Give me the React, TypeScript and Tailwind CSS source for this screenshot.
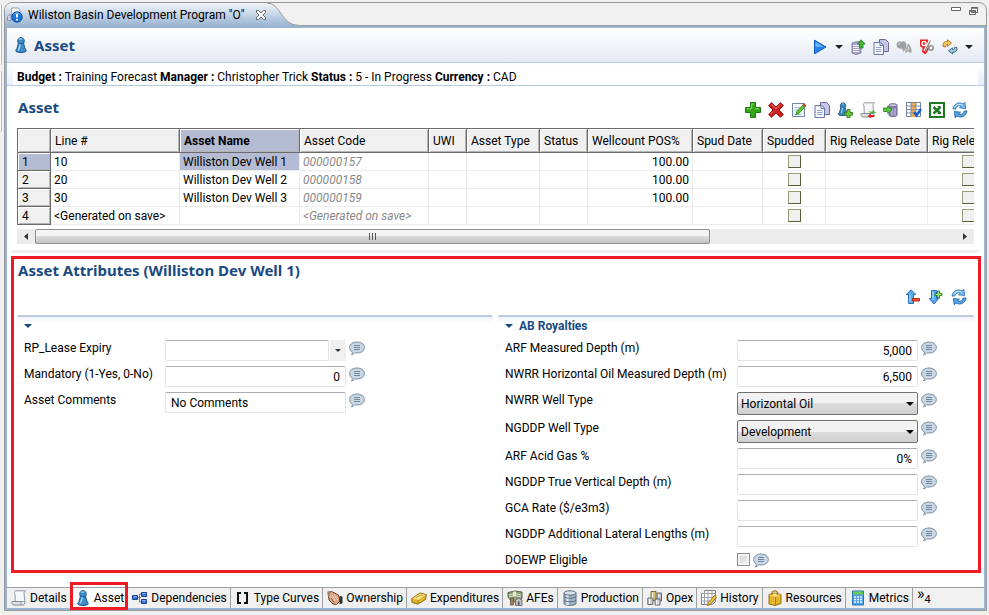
import type { ReactNode } from "react";

function Svg({ children, w = 16, h = 16 }: { children: ReactNode; w?: number; h?: number }) {
  return (
    <svg width={w} height={h} viewBox={`0 0 ${w} ${h}`} fill="none" aria-hidden="true" className="block shrink-0">
      {children}
    </svg>
  );
}

const DownArrow = ({ color = "#222" }: { color?: string }) => (
  <Svg w={8} h={4}>
    <path d="M0 0h8L4 4z" fill={color} />
  </Svg>
);

const Pawn = () => (
  <Svg>
    <path d="M8 .5a3.600 3.600 0 0 1 2.700 5.600c.5 3 1 5.300 2.500 7.100.6 1.300-1.500 2.300-5.200 2.300s-5.800-1-5.200-2.300c1.500-1.800 2-4.100 2.500-7.100A3.600 3.600 0 0 1 8 .5z" fill="#3c8dc8" stroke="#1d5686" />
    <path d="M6.300 2.500c1-.9 2.200-.8 2.800-.1M7.300 6.500C7 9.500 6 12 5 13.400" stroke="#a5d5f5" strokeWidth="1.400" />
    <path d="M5.700 6.300c1 .6 3.600.6 4.600 0" stroke="#1d5686" />
  </Svg>
);
const PawnPlus = () => (
  <Svg>
    <path d="M6 .8a2.800 2.800 0 0 1 2.200 4.400c.4 3 1 5 2.200 6.800.5 1.500-8.600 2.500-9.100 0C2.800 10.100 3.400 8 3.800 5.200A2.800 2.800 0 0 1 6 .8z" fill="#3987bd" stroke="#1f5b8a" />
    <path d="M5 2.300c.7-.6 1.400-.5 1.800 0M5.500 6L4.300 11" stroke="#a9d6f2" />
    <path d="M10 7.500h3v3h3v2.500h-3V16h-3v-3H7.500v-2.500H10z" fill="#6fca3a" stroke="#1f6d17" strokeWidth=".8" />
  </Svg>
);
const Play = () => (
  <Svg>
    <path d="M2.500 1.200L14 8 2.500 14.800z" fill="#2585e8" stroke="#0f5cc0" />
    <path d="M3.500 3l8 4.700h-8z" fill="#6bb6fa" />
  </Svg>
);
const ServerUp = () => (
  <Svg>
    <path d="M2 4l6-1.500 3 1.500v10l-5 1.500L2 14z" fill="#a9a4cf" stroke="#8680ac" />
    <path d="M3 6.500h6M3 8.500h6M3 10.500h6M3 12.500h6" stroke="#f2f1fa" />
    <path d="M11 .8L15.200 5h-2.200v4H9.500V5H7.500z" fill="#45b53a" stroke="#1e7a1c" strokeWidth=".8" />
  </Svg>
);
const Copy = () => (
  <Svg>
    <path d="M6.500.5h6l3 3v9h-9z" fill="#c9c5e6" stroke="#6d6799" />
    <path d="M1 3.500h6.500L10.500 6v9.500H1z" fill="#f5f7fd" stroke="#6474a5" />
    <path d="M7 3.500V6.500h3.500" stroke="#6474a5" />
    <path d="M3 8.500h5.500M3 10.500h5.500M3 12.500h5.500" stroke="#8ea4cf" />
  </Svg>
);
const GrayBalls = () => (
  <Svg>
    <path d="M.5 5.500a3.300 3.300 0 0 1 5-2.800 3.500 3.500 0 0 1 5 2.800l-.7 3.500-2.300 4-1.500-3.500A4 4 0 0 1 .5 5.500z" fill="#a0a0a0" />
    <path d="M12.500 4.500c2 2 3.300 5.500 3.300 9h-2.300l-1.500-1-3 1.500c0-3 1.500-7.500 3.500-9.500z" fill="#a8a8a8" />
    <path d="M2 5.500l2.500-1.500M12.500 7.500v3M10.500 11l1.500-.5" stroke="#dcdcdc" />
  </Svg>
);
const Percent = () => (
  <Svg>
    <path d="M1 .5h8l1.500 3L10 10l-3.500 5.500L3 13l.5-4L1 7z" fill="#ee2222" />
    <circle cx="5" cy="4.500" r="2" stroke="#fff" strokeWidth="1.400" />
    <path d="M11 1.500L5.500 12" stroke="#fff" strokeWidth="2.600" />
    <path d="M11.500 1.500L6 12" stroke="#888" strokeWidth="1.200" />
    <circle cx="12" cy="9" r="2.200" fill="#fff" stroke="#8f8f8f" strokeWidth="1.500" />
  </Svg>
);
const Swap = () => (
  <Svg>
    <path d="M1 7.500C1 3.500 2.500 2.300 5.500 2.500V.8L9.500 4 5.500 7.300V5.500C4 5.400 3.300 6.200 3.700 8z" fill="#f6c65a" stroke="#a87419" strokeWidth=".9" />
    <path d="M15 8.500c.3 3.500-1.500 5-4.500 4.800V15L6.500 11.800 10.500 8.800v1.700c1.700.1 2.300-.7 2.200-2.300z" fill="#9cc4d8" stroke="#3c6b82" strokeWidth=".9" />
  </Svg>
);
const Plus = () => (
  <Svg>
    <path d="M5.500.5h5v5h5v5h-5v5h-5v-5h-5v-5h5z" fill="#35a51c" stroke="#1d7a10" />
    <path d="M6.500 2h2.500M2 6.700h4.700V2M10 6.700h4" stroke="#86dd66" />
  </Svg>
);
const Cross = () => (
  <Svg>
    <path d="M3.500.7L8 5l4.500-4.300 2.800 2.800L11 8l4.300 4.500-2.800 2.800L8 11l-4.500 4.300L.7 12.500 5 8 .7 3.500z" fill="#cf2020" stroke="#8d0f0f" />
    <path d="M3.500 2.300L8 6.700l4.300-4.200M2.300 12.300L5 9.600" stroke="#f07b6c" />
  </Svg>
);
const Edit = () => (
  <Svg>
    <path d="M1.500 1.500h12v13h-12z" fill="#f2f6fb" stroke="#6d87a5" />
    <path d="M3.500 5.500h6M3.500 8h4M3.500 12.500h7" stroke="#a9bdd3" />
    <path d="M12.800 2.200l2 2L7.800 11.500 4.800 12.500l1-3z" fill="#5fc22f" stroke="#2c7d16" strokeWidth=".8" />
    <path d="M13 1.300l2.300 2.300-1.500 1.500-2.300-2.300z" fill="#e0352b" />
  </Svg>
);
const ScrollShape = () => (
  <>
    <path d="M4.500.8h10c-1.500.8-1.600 2-1.400 3.200l.7 7.500H4.300L4 4.300C3.300 3 3.300 1.500 4.500.8z" fill="#f7f8fa" stroke="#9299a3" />
    <path d="M1 11.500h9.300c-.7 1.500-.3 3 1.200 3.500H2.800C1.300 14.700.5 13 1 11.500z" fill="#dfe2e7" stroke="#848b95" />
    <path d="M13.800 11.500c.2 2-.6 3.500-2.300 3.500" stroke="#848b95" />
  </>
);
const Scroll = () => (
  <Svg>
    <ScrollShape />
  </Svg>
);
const ScrollSwap = () => (
  <Svg>
    <ScrollShape />
    <path d="M8 9.500h4.500V8L16 10.500 12.500 12z" fill="#49b938" />
    <path d="M14.500 13H11v-1.500L7.500 14l3.500 2v-1h3.500z" fill="#d62222" />
  </Svg>
);
const DbArrow = () => (
  <Svg>
    <path d="M6 3.500v9.500c0 2.200 8 2.200 8 0V3.500z" fill="#8e88b8" stroke="#6b658f" />
    <ellipse cx="10" cy="3.300" rx="4" ry="1.600" fill="#cfcbe6" stroke="#6b658f" />
    <path d="M9 7v6.500M12 6.500v7" stroke="#c9c6e0" />
    <path d="M.7 6h4V4L9 7.700 4.700 11.500V9.500h-4z" fill="#5cc63e" stroke="#1f7a1b" strokeWidth=".8" />
  </Svg>
);
const GridCheck = () => (
  <Svg>
    <path d="M.5.5h14v14H.5z" fill="#fff" stroke="#6f7f96" />
    <path d="M5 1h5v14H5z" fill="#f3a94b" />
    <path d="M5 .5v14M10 .5v14M.5 4h14M.5 7.500h14M.5 11h14" stroke="#7e8ca3" />
    <path d="M8 10l2.500 3.500L15 7" stroke="#1463cc" strokeWidth="2.400" />
  </Svg>
);
const Excel = () => (
  <Svg>
    <path d="M1 1h14v14H1z" fill="#fff" stroke="#1c7a22" strokeWidth="2" />
    <path d="M4.500 5l7 6.500M11.500 5l-7 6.500" stroke="#1c7a22" strokeWidth="2.400" />
    <path d="M8.500 4.500h3M8.500 11.500h3.500" stroke="#1c7a22" />
  </Svg>
);
const Refresh = () => (
  <Svg>
    <path d="M1 7C1.500 2.500 6.500-.8 11 2l1.800-1.700.9 6.200-6.200-.7L9.200 4.200C6.700 3 4.300 4.300 3.800 7z" fill="#7bbcf0" stroke="#2c74bb" strokeWidth=".9" />
    <path d="M15 9c-.5 4.500-5.500 7.800-10 5l-1.800 1.700-.9-6.200 6.200.7-1.700 1.600c2.500 1.200 4.900-.1 5.400-2.800z" fill="#5aa3e0" stroke="#2467ab" strokeWidth=".9" />
    <path d="M2.500 5.500C4 2.500 7.500 1.500 10.500 3.200" stroke="#d3eafc" />
  </Svg>
);
const ArrowUpMinus = () => (
  <Svg>
    <path d="M6 .8L10.700 5.500H8.500V14.500h-5v-9H1.300z" fill="#56abee" stroke="#1c62b5" strokeWidth=".9" />
    <path d="M5 5.500v8" stroke="#b8dffb" />
    <path d="M7.500 9.500h7v2.500h-7z" fill="#f2542d" stroke="#b81c10" strokeWidth=".9" />
  </Svg>
);
const ArrowDownPlus = () => (
  <Svg>
    <path d="M3.500 1.500h5v8h2.200L6 15 1.300 9.500h2.200z" fill="#56abee" stroke="#1c62b5" strokeWidth=".9" />
    <path d="M5 2.500v8" stroke="#b8dffb" />
    <path d="M9.500 2h2v2.500H14v2h-2.500V9h-2V6.500H7v-2h2.500z" fill="#a8e67c" stroke="#22821a" strokeWidth=".9" />
  </Svg>
);
const Bubble = () => (
  <Svg w={16} h={15}>
    <path d="M8 1c4 0 7.400 2.200 7.400 5.500S12 12 8 12c-.8 0-1.500 0-2.200-.2-1 1.200-2 1.900-3.300 2.100.7-.8 1-1.700.8-2.900C1.600 10 .6 8.500.6 6.500.6 3.200 4 1 8 1z" fill="#c6d6e4" stroke="#7c8f9f" />
    <path d="M5 4.500h6M5 6.500h6M5 8.500h6" stroke="#75889a" />
  </Svg>
);
const Nodes = () => (
  <Svg>
    <path d="M5 7.500h4M7.500 4v8M7.500 4H10M7.500 12H10" stroke="#777" />
    <path d="M.5 5.500h5v4h-5zM9.500 2.500h5v4h-5zM9.500 9.500h5v4h-5z" fill="#3b78dc" stroke="#1b3f9c" />
    <path d="M1.500 6.500h3M10.500 3.500h3M10.500 10.500h3" stroke="#93bdf5" />
  </Svg>
);
const Brackets = () => (
  <Svg>
    <path d="M6 3H3v10h3M9 3h3v10H9" stroke="#111" strokeWidth="2" />
  </Svg>
);
const Hands = () => (
  <Svg>
    <path d="M1 2.500l3.500-1 7 3.500 1.500 6-3.500 3.500-3.500-.5L2 10z" fill="#d9a583" stroke="#6e4630" />
    <path d="M3 6l4 5M5 5l4 6.500M7.500 5l3.500 5" stroke="#f4d3bb" />
    <path d="M.5 1.500L3 1v4L1 6.500z" fill="#9a8578" />
    <path d="M12.500 6l3 .5v7l-3 .5z" fill="#303030" />
    <path d="M4 8l3 4" stroke="#7d5038" />
  </Svg>
);
const Gold = () => (
  <Svg>
    <path d="M.8 8.500L9 3l6.300 1.500-.8 5L7 14l-6-1.500z" fill="#e2b52c" stroke="#8d6a0e" />
    <path d="M1.500 8.500L9.200 3.600l5.300 1.200L7.500 9.700z" fill="#fbe88a" />
    <path d="M7.300 10l-.3 3.500" stroke="#a98113" />
    <path d="M4.500 8l5-3 2.500.5" stroke="#c59a22" />
  </Svg>
);
const Cash = () => (
  <Svg>
    <path d="M1 2.500l7-1.500 7 1v6l-2 4H5L1 7z" fill="#8da07c" stroke="#58634b" />
    <path d="M2 5l6-1.500L14 5M2 7l6-1.500L14 7" stroke="#d7dfc9" />
    <path d="M6 1.500l3 0v5H6z" fill="#efe6c7" />
    <path d="M3.500 8h3v7h-3z" fill="#a07f5b" stroke="#6e563c" strokeWidth=".8" />
    <path d="M8.500 10l3-2 3.500 2v5.500H8.500z" fill="#bfbfbf" stroke="#6b6b6b" strokeWidth=".9" />
    <path d="M11 11.500h1.500v3.500H11z" fill="#555" />
  </Svg>
);
const Database = () => (
  <Svg>
    <path d="M2 3v10.500c0 2.500 12 2.500 12 0V3z" fill="#9fb1c4" stroke="#5c6f84" />
    <path d="M5.500 5v10" stroke="#dde6ef" strokeWidth="2.500" />
    <ellipse cx="8" cy="3" rx="6" ry="2.200" fill="#d7e1ea" stroke="#5c6f84" />
    <path d="M2 6.500c0 2.300 12 2.300 12 0M2 10c0 2.300 12 2.300 12 0" stroke="#5c6f84" />
  </Svg>
);
const Valves = () => (
  <Svg>
    <path d="M4 1.500h5v9H4z" fill="#dcc36c" stroke="#7d6a28" />
    <path d="M10 3h4.500v8H10z" fill="#b9bdc0" stroke="#676b70" />
    <path d="M.8 8h5v6.500h-5zM8 9h5v6H8z" fill="#cfd2d5" stroke="#696d72" />
    <path d="M2.500 9v5M5.500 2.500v5M9.700 10v4.500M11.800 4v4" stroke="#fff" />
  </Svg>
);
const History = () => (
  <Svg>
    <path d="M3.500.5h11v11l-3 3H.5v-11h3z" fill="#fff" stroke="#7c7f86" />
    <path d="M3.500.5v14M7 .5v14M11 .5v14M.5 3.500h14M.5 7.500h14M.5 11h14" stroke="#9da0a7" />
    <path d="M13.500 5.500l2 2-6.500 7-2.500 1 .7-2.700z" fill="#f4c53c" stroke="#8d6a1b" strokeWidth=".9" />
  </Svg>
);
const Box = () => (
  <Svg>
    <path d="M2 4.500l5.500-1.500L14 4.500v9L8 15.500 2 14z" fill="#e5b52e" stroke="#94700f" />
    <path d="M2.500 4.700L7.500 3.500l6 1.200L8 6.700z" fill="#fae38c" />
    <path d="M8.500 7v8" stroke="#a98114" />
    <path d="M5 5V2.500C6 .3 9.500.3 10.500 2.500V5" stroke="#a07812" strokeWidth="1.300" />
  </Svg>
);
const Calc = () => (
  <Svg>
    <path d="M2.500 1h11v14h-11z" fill="#4f9fe3" stroke="#2d74b8" />
    <path d="M3 1.500h10v3H3z" fill="#66cc55" />
    <path d="M4 7h2M7 7h2M10 7h2M4 9.500h2M7 9.500h2M10 9.500h2M4 12h2M7 12h2M10 12h2" stroke="#e6f3ff" strokeWidth="1.400" />
  </Svg>
);
const Document = () => (
  <Svg>
    <path d="M4.500 1h7l2.500 5v8h-9z" fill="#fff" stroke="#98a3bd" />
    <path d="M.5 9.500L4 7v6.500H.5z" fill="#cfd4e6" stroke="#8b8fb0" />
    <circle cx="10" cy="10" r="5.200" fill="#1c75d4" stroke="#0d4da0" />
    <path d="M7 7.500c1.500-2 4.500-2 6 0" stroke="#8cc6f8" />
    <path d="M10 6.800v3.700M10 11.700v1.800" stroke="#fff" strokeWidth="1.800" />
  </Svg>
);

function IconButton({ label, children }: { label: string; children: ReactNode }) {
  return (
    <button type="button" aria-label={label} className="block shrink-0">
      {children}
    </button>
  );
}

const heading = "font-['Noto_Sans','Open_Sans',sans-serif] text-[15px] leading-5 font-bold text-[#1a4a82]";

const columns = [
  { name: "Line #", width: "w-[129px]" },
  { name: "Asset Name", width: "w-[120px]" },
  { name: "Asset Code", width: "w-[129px]" },
  { name: "UWI", width: "w-[38px]" },
  { name: "Asset Type", width: "w-[73px]" },
  { name: "Status", width: "w-[48px]" },
  { name: "Wellcount POS%", width: "w-[105px]" },
  { name: "Spud Date", width: "w-[70px]" },
  { name: "Spudded", width: "w-[63px]" },
  { name: "Rig Release Date", width: "w-[102px]" },
  { name: "Rig Rele", width: "w-[82px]" },
];

const rows = [
  { line: "10", name: "Williston Dev Well 1", code: "000000157", pos: "100.00" },
  { line: "20", name: "Williston Dev Well 2", code: "000000158", pos: "100.00" },
  { line: "30", name: "Williston Dev Well 3", code: "000000159", pos: "100.00" },
  { line: "<Generated on save>", name: "", code: "<Generated on save>", pos: "" },
];

const raised = "border-r border-b border-[#6b6b6b] shadow-[inset_1px_1px_0_#fff,inset_-1px_-1px_0_#b5b5b5]";
const cell = "h-[18px] border-r border-b border-[#ececec] px-[3px] whitespace-nowrap";

function CellCheck({ label }: { label: string }) {
  return (
    <input
      type="checkbox"
      aria-label={label}
      className="mx-auto block size-[13px] appearance-none border border-t-[#9a9a78] border-r-[#5c5c3c] border-b-[#5c5c3c] border-l-[#9a9a78] bg-[#f0f0f0]"
    />
  );
}

function AssetTable() {
  return (
    <div className="overflow-hidden">
      <table className="w-[993px] table-fixed border-separate border-spacing-0 border-t border-l border-[#6b6b6b] text-left leading-4">
        <thead>
          <tr>
            <th aria-label="Row" className={`h-6 w-[33px] bg-[#f0f0f0] ${raised}`} />
            {columns.map((c) => (
              <th
                key={c.name}
                className={`${c.width} overflow-hidden pl-1 whitespace-nowrap ${raised} ${
                  c.name === "Asset Name" ? "bg-[#b4bbd3] font-bold" : "bg-[#f0f0f0] font-normal"
                }`}
              >
                {c.name}
              </th>
            ))}
          </tr>
        </thead>
        <tbody>
          {rows.map((r, i) => (
            <tr key={i}>
              <th className={`h-[18px] pl-1 font-normal ${raised} ${i === 0 ? "bg-[#b4bbd3]" : "bg-[#f0f0f0]"}`}>{i + 1}</th>
              <td className={cell}>{r.line}</td>
              <td className={`${cell} ${i === 0 ? "bg-[#b4bbd3]" : ""}`}>{r.name}</td>
              <td className={`${cell} text-[#888] italic`}>{r.code}</td>
              <td className={cell} />
              <td className={cell} />
              <td className={cell} />
              <td className={`${cell} text-right`}>{r.pos}</td>
              <td className={cell} />
              <td className={cell}>
                <CellCheck label={`Spudded, row ${i + 1}`} />
              </td>
              <td className={cell} />
              <td className={cell}>
                <CellCheck label={`Rig released, row ${i + 1}`} />
              </td>
            </tr>
          ))}
        </tbody>
      </table>
      <div className="mt-1 flex h-[15px] bg-[#ececec]">
        <button type="button" aria-label="Scroll left" className="flex w-[18px] items-center justify-center">
          <Svg w={4} h={7}>
            <path d="M4 0v7L0 3.500z" fill="#333" />
          </Svg>
        </button>
        <div className="flex-1">
          <div className="flex h-full w-11/15 items-center justify-center gap-[2px] rounded-xs border border-[#8f8f8f] bg-linear-to-b from-[#f4f4f4] from-50% via-[#dadada] via-50% to-[#c6c6c6]">
            <span className="h-[7px] w-px bg-[#555]" />
            <span className="h-[7px] w-px bg-[#555]" />
            <span className="h-[7px] w-px bg-[#555]" />
          </div>
        </div>
        <button type="button" aria-label="Scroll right" className="flex w-[18px] items-center justify-center">
          <Svg w={4} h={7}>
            <path d="M0 0v7l4-3.500z" fill="#333" />
          </Svg>
        </button>
      </div>
    </div>
  );
}

type Field = { id: string; label: string; kind: "number" | "text" | "select" | "date" | "check"; value?: string };

const leftFields: Field[] = [
  { id: "expiry", label: "RP_Lease Expiry", kind: "date" },
  { id: "mandatory", label: "Mandatory (1-Yes, 0-No)", kind: "number", value: "0" },
  { id: "comments", label: "Asset Comments", kind: "text", value: "No Comments" },
];
const rightFields: Field[] = [
  { id: "arf-depth", label: "ARF Measured Depth (m)", kind: "number", value: "5,000" },
  { id: "nwrr-depth", label: "NWRR Horizontal Oil Measured Depth (m)", kind: "number", value: "6,500" },
  { id: "nwrr-type", label: "NWRR Well Type", kind: "select", value: "Horizontal Oil" },
  { id: "ngddp-type", label: "NGDDP Well Type", kind: "select", value: "Development" },
  { id: "acid-gas", label: "ARF Acid Gas %", kind: "number", value: "0%" },
  { id: "tvd", label: "NGDDP True Vertical Depth (m)", kind: "number" },
  { id: "gca", label: "GCA Rate ($/e3m3)", kind: "number" },
  { id: "lateral", label: "NGDDP Additional Lateral Lengths (m)", kind: "number" },
  { id: "doewp", label: "DOEWP Eligible", kind: "check" },
];

const box = "h-[21px] min-w-0 rounded-xs border border-[#e2e3ea] border-t-[#abadb3] bg-white px-[5px] pt-px leading-4";

function Control({ f }: { f: Field }) {
  if (f.kind === "check")
    return (
      <input
        id={f.id}
        type="checkbox"
        className="mt-px block size-[13px] appearance-none border border-[#8e8f8f] bg-linear-to-br from-[#c9cdd2] to-[#f6f6f6] shadow-[inset_0_0_0_2px_#f4f4f4]"
      />
    );
  if (f.kind === "select")
    return (
      <div className="relative w-[181px]">
        <select
          id={f.id}
          defaultValue={f.value}
          className="block h-[23px] w-full appearance-none rounded-xs border border-[#707070] bg-linear-to-b from-[#f2f2f2] from-50% via-[#dddddd] via-50% to-[#cfcfcf] px-[3px] leading-4"
        >
          <option>{f.value}</option>
        </select>
        <span className="pointer-events-none absolute top-[10px] right-1">
          <DownArrow color="#000" />
        </span>
      </div>
    );
  if (f.kind === "date")
    return (
      <div className="flex w-[181px] gap-px">
        <input id={f.id} className={`${box} flex-1`} />
        <button type="button" aria-label="Pick a date" className="flex w-4 items-center justify-center bg-[#f0f0f0]">
          <Svg w={6} h={3}>
            <path d="M0 0h6L3 3z" fill="#333" />
          </Svg>
        </button>
      </div>
    );
  return <input id={f.id} defaultValue={f.value} className={`${box} w-[181px] ${f.kind === "number" ? "text-right" : ""}`} />;
}

function Group({ title, fields, labelWidth }: { title: string; fields: Field[]; labelWidth: string }) {
  return (
    <section className="min-w-0 flex-1">
      <div className="flex h-[25px] items-center gap-[6px] rounded-t-xs border-t-2 border-[#b9cce4] bg-linear-to-b from-[#eef3f9] to-white to-25% pb-[5px] pl-[7px]">
        <button type="button" aria-label={`Collapse ${title || "section"}`}>
          <DownArrow color="#17457d" />
        </button>
        <h3 className="font-bold text-[#1a4a82]">{title}</h3>
      </div>
      <div className="flex flex-col gap-[5px] pl-[7px]">
        {fields.map((f) => (
          <div key={f.id} className="flex items-start">
            <label htmlFor={f.id} className={`${labelWidth} shrink-0 leading-4 whitespace-nowrap`}>
              {f.label}
            </label>
            <Control f={f} />
            <button type="button" aria-label={`Comment on ${f.label}`} className="ml-[3px] h-4">
              <Bubble />
            </button>
          </div>
        ))}
      </div>
    </section>
  );
}

const tabs = [
  { name: "Details", icon: <Scroll /> },
  { name: "Asset", icon: <Pawn /> },
  { name: "Dependencies", icon: <Nodes /> },
  { name: "Type Curves", icon: <Brackets /> },
  { name: "Ownership", icon: <Hands /> },
  { name: "Expenditures", icon: <Gold /> },
  { name: "AFEs", icon: <Cash /> },
  { name: "Production", icon: <Database /> },
  { name: "Opex", icon: <Valves /> },
  { name: "History", icon: <History /> },
  { name: "Resources", icon: <Box /> },
  { name: "Metrics", icon: <Calc /> },
];

function BottomTabs() {
  return (
    <nav className="flex h-[21px] border-t border-[#a0a0a0] bg-[#f0f0f0]">
      {tabs.map((t) => {
        const active = t.name === "Asset";
        return (
          <button
            key={t.name}
            type="button"
            className={`relative flex items-center gap-[3px] border-r border-[#a0a0a0] pr-[3px] pb-px pl-1 whitespace-nowrap ${active ? "bg-white" : ""}`}
          >
            {t.icon}
            {t.name}
            {active && <span className="absolute -top-[6px] -right-px -bottom-[2px] -left-px border-3 border-[#ed1c24]" />}
          </button>
        );
      })}
      <button type="button" aria-label="4 more pages" className="flex pl-1">
        <span className="-mt-1 text-base leading-5">»</span>
        <span className="mt-[6px] text-[11px] leading-3">4</span>
      </button>
    </nav>
  );
}

export default function App() {
  return (
    <div className="flex min-h-screen bg-[#f0f0f0] font-[Roboto,'Open_Sans',sans-serif] text-xs text-black">
      <div className="flex w-1 flex-col items-start gap-[6px] pt-1">
        <div className="h-[61px] w-[2px] rounded-r-xs border-r border-[#b8b8b8] bg-white" />
        <div className="h-[61px] w-[2px] rounded-r-xs border-r border-[#b8b8b8] bg-white" />
      </div>
      <div className="mt-[2px] mr-[2px] mb-1 flex min-w-0 flex-1 flex-col overflow-hidden rounded-t-lg border border-[#999]">
        <div className="flex h-[23px]">
          <div className="flex items-center gap-[5px] bg-linear-to-b from-[#f2f6fb] to-[#99b4d1] pl-[2px]">
            <Document />
            <span className="w-[222px] whitespace-nowrap">Wiliston Basin Development Program "O"</span>
            <IconButton label="Close editor">
              <Svg w={12} h={12}>
                <path d="M1.500 1.500h2L6 4l2.500-2.500h2v2L8 6l2.500 2.500v2h-2L6 8l-2.500 2.500h-2v-2L4 6 1.500 3.500z" fill="#fff" stroke="#666" />
              </Svg>
            </IconButton>
          </div>
          <svg width="32" height="23" viewBox="0 0 32 23" className="block bg-[#f0f0f0]" aria-hidden="true">
            <defs>
              <linearGradient id="tab-end" x1="0" y1="0" x2="0" y2="1">
                <stop offset="0" stopColor="#f2f6fb" />
                <stop offset="1" stopColor="#99b4d1" />
              </linearGradient>
            </defs>
            <path d="M0 0C14 0 14 22.500 32 22.500V23H0z" fill="url(#tab-end)" />
            <path d="M0 0C14 0 14 22.500 32 22.500" fill="none" stroke="#999" />
          </svg>
          <div className="flex flex-1 items-start justify-end gap-2 border-b border-[#999] pt-1 pr-2">
            <IconButton label="Minimize">
              <Svg w={10} h={4}>
                <path d="M.5.5h9v3h-9z" fill="#fff" stroke="#666" />
              </Svg>
            </IconButton>
            <IconButton label="Restore">
              <Svg w={9} h={9}>
                <path d="M2.500.5h6v5h-6zM.5 3.500h6v4h-6z" fill="#fff" stroke="#666" />
                <path d="M2 1h7M0 4h7" stroke="#666" strokeWidth="1.500" />
              </Svg>
            </IconButton>
          </div>
        </div>
        <main className="flex flex-1 flex-col border-2 border-[#99b4d1] bg-white">
          <header className="flex h-[35px] items-center border-b border-[#b4cbe3] bg-linear-to-b from-white to-[#e3e9f3] pr-[11px] pl-[6px]">
            <Pawn />
            <h1 className={`ml-[5px] flex-1 ${heading}`}>Asset</h1>
            <div className="flex items-center gap-[7px] pt-[3px]">
              <IconButton label="Run"><Play /></IconButton>
              <IconButton label="Run options"><DownArrow /></IconButton>
              <IconButton label="Publish"><ServerUp /></IconButton>
              <IconButton label="Copy"><Copy /></IconButton>
              <IconButton label="Compare"><GrayBalls /></IconButton>
              <IconButton label="Rates"><Percent /></IconButton>
              <IconButton label="Convert"><Swap /></IconButton>
              <IconButton label="Convert options"><DownArrow /></IconButton>
            </div>
          </header>
          <div className="h-[23px] border-b border-[#b4cbe3] bg-linear-to-b from-white to-[#e6edf6] px-[6px] pt-[5px]">
            <p className="h-[17px] bg-white pt-px pl-1 leading-4 whitespace-nowrap">
              <b>Budget :</b> Training Forecast <b>Manager :</b> Christopher Trick <b>Status :</b> 5 - In Progress <b>Currency :</b> CAD
            </p>
          </div>

          <section className="px-[10px]">
            <div className="flex h-[42px] items-start pr-[6px] pl-px">
              <h2 className={`mt-[11px] flex-1 ${heading}`}>Asset</h2>
              <div className="mt-4 flex gap-[7px]">
                <IconButton label="Add"><Plus /></IconButton>
                <IconButton label="Delete"><Cross /></IconButton>
                <IconButton label="Edit"><Edit /></IconButton>
                <IconButton label="Copy rows"><Copy /></IconButton>
                <IconButton label="Add asset"><PawnPlus /></IconButton>
                <IconButton label="Transfer"><ScrollSwap /></IconButton>
                <IconButton label="Import"><DbArrow /></IconButton>
                <IconButton label="Choose columns"><GridCheck /></IconButton>
                <IconButton label="Export to Excel"><Excel /></IconButton>
                <IconButton label="Refresh"><Refresh /></IconButton>
              </div>
            </div>
            <AssetTable />
          </section>

          <div className="mx-[5px] mt-[6px] h-[3px] bg-[#f0f0f0]" />

          <section className="mt-[3px] mr-[3px] ml-1 border-3 border-[#ed1c24] pr-1 pb-[2px] pl-[3px]">
            <h2 className={`pt-px pl-px ${heading}`}>Asset Attributes (Williston Dev Well 1)</h2>
            <div className="flex h-[35px] items-start justify-end gap-[7px] pt-[9px] pr-[7px]">
              <IconButton label="Move up"><ArrowUpMinus /></IconButton>
              <IconButton label="Move down"><ArrowDownPlus /></IconButton>
              <IconButton label="Refresh attributes"><Refresh /></IconButton>
            </div>
            <div className="flex gap-[5px]">
              <Group title="" fields={leftFields} labelWidth="w-[141px]" />
              <Group title="AB Royalties" fields={rightFields} labelWidth="w-[232px]" />
            </div>
          </section>

          <div className="flex-1" />
          <BottomTabs />
        </main>
      </div>
    </div>
  );
}
